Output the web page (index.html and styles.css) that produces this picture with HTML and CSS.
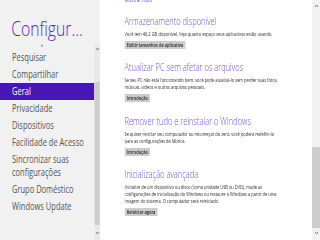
FILE: index.html
```html
<!DOCTYPE html>
<html lang="pt-BR">
<head>
  <meta charset="UTF-8">
  <meta name="viewport" content="width=device-width, initial-scale=1.0">
  <title>Configurações do PC</title>
  <link rel="stylesheet" href="styles.css">
</head>
<body>
  <div class="screen">
    <div class="side">
      <div class="side-head">Configur...</div>
      <div class="side-body">
        <div class="nav">
          <ul class="nav-list">
            <li>Atualizações</li>
            <li>Pesquisar</li>
            <li>Compartilhar</li>
            <li class="active">Geral</li>
            <li>Privacidade</li>
            <li>Dispositivos</li>
            <li>Facilidade de Acesso</li>
            <li>Sincronizar suas<br>configurações</li>
            <li>Grupo Doméstico</li>
            <li>Windows Update</li>
          </ul>
        </div>
        <div class="bar bar-side">
          <div class="arrow"><svg width="6" height="4" viewBox="0 0 6 4"><polyline points="1,3 3,1 5,3" /></svg></div>
          <div class="track"><div class="thumb"></div></div>
          <div class="arrow"><svg width="6" height="4" viewBox="0 0 6 4"><polyline points="1,1 3,3 5,1" /></svg></div>
        </div>
      </div>
    </div>

    <div class="main">
      <div class="content">
        <div class="link-line">Mostrar tudo</div>

        <div class="section first">
          <h2>Armazenamento disponível</h2>
          <p>Você tem 46,2 GB disponível. Veja quanto espaço seus aplicativos estão usando.</p>
          <button>Exibir tamanhos de aplicativo</button>
        </div>

        <div class="section">
          <h2>Atualizar PC sem afetar os arquivos</h2>
          <p>Se seu PC não está funcionando bem, você pode atualizá-lo sem perder suas fotos,<br>músicas, vídeos e outros arquivos pessoais.</p>
          <button>Introdução</button>
        </div>

        <div class="section">
          <h2>Remover tudo e reinstalar o Windows</h2>
          <p>Se quiser reciclar seu computador ou recomeçar do zero, você poderá redefini-lo<br>para as configurações de fábrica.</p>
          <button>Introdução</button>
        </div>

        <div class="section">
          <h2>Inicialização avançada</h2>
          <p>Inicialize de um dispositivo ou disco (como unidade USB ou DVD), mude as<br>configurações de inicialização do Windows ou restaure o Windows a partir de uma<br>imagem do sistema. O computador será reiniciado.</p>
          <button>Reiniciar agora</button>
        </div>
      </div>
      <div class="bar bar-main">
        <div class="arrow"><svg width="6" height="4" viewBox="0 0 6 4"><polyline points="1,3 3,1 5,3" /></svg></div>
        <div class="track"><div class="thumb"></div></div>
        <div class="arrow"><svg width="6" height="4" viewBox="0 0 6 4"><polyline points="1,1 3,3 5,1" /></svg></div>
      </div>
    </div>
  </div>
</body>
</html>
```

FILE: styles.css
```css
html {
  overflow: hidden;
}
body {
  margin: 0;
  width: 320px;
  height: 240px;
  overflow: hidden;
  background: #ffffff;
  font-family: 'Open Sans', 'Noto Sans', sans-serif;
}
.screen {
  display: flex;
  width: 427px;
  height: 240px;
  transform: scaleX(0.75);
  transform-origin: 0 0;
}
.side {
  width: 133px;
  background: #f1f1f1;
  display: flex;
  flex-direction: column;
}
.side-head {
  height: 44px;
  box-sizing: border-box;
  padding: 15px 0 0 15px;
  font-size: 21px;
  font-weight: 300;
  line-height: 26px;
  color: #5228c6;
  white-space: nowrap;
}
.side-body {
  flex: 1;
  display: flex;
  min-height: 0;
}
.nav {
  flex: 1;
  overflow: hidden;
}
.nav-list {
  list-style: none;
  margin: -12px 0 0 0;
  padding: 0;
}
.nav-list li {
  padding: 2px 16px;
  font-size: 10px;
  line-height: 13px;
  color: #555555;
  white-space: nowrap;
}
.nav-list li.active {
  background: #4617b4;
  color: #ffffff;
}
.bar {
  display: flex;
  flex-direction: column;
}
.bar-side {
  width: 7px;
  background: #e8e8e8;
  padding-bottom: 2px;
}
.bar-main {
  width: 11px;
  background: #f2f2f2;
  padding: 1px 0 2px;
}
.arrow {
  height: 10px;
  display: flex;
  align-items: center;
  justify-content: center;
}
.arrow polyline {
  fill: none;
  stroke: #6f6f6f;
  stroke-width: 1;
}
.track {
  flex: 1;
  display: flex;
  flex-direction: column;
}
.bar-side .track {
  padding: 28px 0 3px;
}
.bar-main .track {
  padding-top: 136px;
}
.thumb {
  flex: 1;
  background: #cdcdcd;
}
.main {
  flex: 1;
  display: flex;
  min-width: 0;
}
.content {
  flex: 1;
  overflow: hidden;
  padding-left: 33px;
  display: flex;
  flex-direction: column;
  gap: 14.5px;
}
.link-line {
  margin-top: -4px;
  margin-bottom: -3px;
  font-size: 6px;
  line-height: 9px;
  color: #6a50c8;
}
.section {
  display: flex;
  flex-direction: column;
  align-items: flex-start;
}
.section h2 {
  margin: 0 0 5px 0;
  font-size: 10px;
  font-weight: 300;
  line-height: 9px;
  color: #6a50c8;
  white-space: nowrap;
}
.section p {
  margin: 0;
  font-size: 5.3px;
  line-height: 7px;
  color: #2b2b2b;
  white-space: nowrap;
}
.section button {
  margin-top: 3px;
  height: 8px;
  padding: 0 3px;
  border: none;
  background: #cccccc;
  font-family: inherit;
  font-size: 5.3px;
  font-weight: 600;
  line-height: 8px;
  color: #1e1e1e;
}
```
